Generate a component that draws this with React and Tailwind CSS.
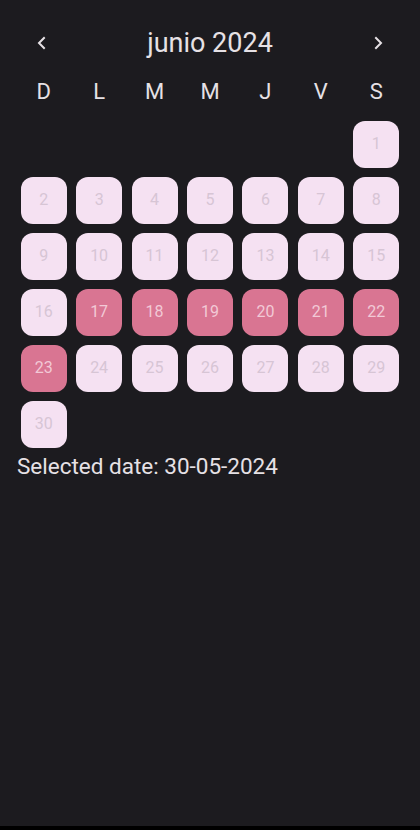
const days = Array.from({ length: 30 }, (_, i) => i + 1);
const weekdays = ["D", "L", "M", "M", "J", "V", "S"];
const highlighted = [17, 18, 19, 20, 21, 22, 23];
const offset = 6; // 1 de junio 2024 cae en sábado

function Chevron({ dir }) {
  return (
    <svg width="12" height="14" viewBox="0 0 12 14" fill="none">
      <path
        d={dir === "left" ? "M8 2 L3 7 L8 12" : "M4 2 L9 7 L4 12"}
        stroke="#e6e1e5"
        strokeWidth="2"
        strokeLinecap="square"
      />
    </svg>
  );
}

export default function App() {
  const cells = [...Array(offset).fill(null), ...days];

  return (
    <div className="min-h-[830px] bg-[#1c1b1f] font-['Roboto',sans-serif] text-[#e6e1e5] border-b-4 border-black">
      <div className="px-4 pt-[25px]">
        <div className="flex h-9 items-center justify-between px-[20px]">
          <Chevron dir="left" />
          <span className="text-[27px] leading-none">junio 2024</span>
          <Chevron dir="right" />
        </div>
        <div className="mt-[19px] grid h-[24px] grid-cols-7 text-center text-[22px] leading-[24px]">
          {weekdays.map((d, i) => (
            <span key={i}>{d}</span>
          ))}
        </div>
        <div className="mt-[12px] grid grid-cols-7">
          {cells.map((d, i) => (
            <div key={i} className="flex h-14 items-center justify-center">
              {d && (
                <div
                  className={
                    highlighted.includes(d)
                      ? "flex h-[47px] w-[46px] items-center justify-center rounded-[12px] bg-[#d97592] text-[16px] text-[#f2c9d6]"
                      : "flex h-[47px] w-[46px] items-center justify-center rounded-[12px] bg-[#f5e1f2] text-[16px] text-[#d7c5d5]"
                  }
                >
                  {d}
                </div>
              )}
            </div>
          ))}
        </div>
      </div>
      <p className="px-[17px] text-[22.5px] leading-7">Selected date: 30-05-2024</p>
    </div>
  );
}
